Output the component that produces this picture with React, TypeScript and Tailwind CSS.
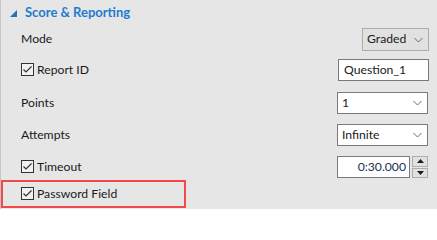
import React from "react";

const font = { fontFamily: '"Segoe UI", Lato, "Noto Sans", sans-serif' };

function CheckBox() {
  return (
    <span className="flex h-[13px] w-[13px] shrink-0 items-center justify-center border border-[#333333] bg-[#f2f2f2]">
      <svg width="11" height="11" viewBox="0 0 11 11">
        <path d="M1.5 5.5 L4 8 L9.5 2.5" fill="none" stroke="#333333" strokeWidth="1.2" />
      </svg>
    </span>
  );
}

function Chevron() {
  return (
    <svg width="9" height="6" viewBox="0 0 9 6" className="shrink-0">
      <path d="M0.5 1 L4.5 5 L8.5 1" fill="none" stroke="#6a6a6a" strokeWidth="1" />
    </svg>
  );
}

function Label({ text, checked }: { text: string; checked?: boolean }) {
  return (
    <div className="flex items-center gap-[3px] text-[12.2px] text-[#1a1a1a]">
      {checked ? <CheckBox /> : null}
      <span>{text}</span>
    </div>
  );
}

function Select({ value, width, flat }: { value: string; width: string; flat?: boolean }) {
  return (
    <div
      className={`flex h-full items-center justify-between pl-[4px] pr-[5px] text-[12.2px] text-[#1a1a1a] ${width} ${
        flat ? "border border-[#adadad] bg-[#e1e1e1]" : "border border-[#7a7a7a] bg-white"
      }`}
    >
      <span>{value}</span>
      <Chevron />
    </div>
  );
}

export default function App() {
  return (
    <div
      className="h-[209px] w-[437px] overflow-hidden border-l border-[#c6c6c6] bg-[#e6e6e6]"
      style={font}
    >
      <div className="flex h-[26px] items-center gap-[8px] pl-[9px]">
        <svg width="7" height="7" viewBox="0 0 7 7">
          <path d="M7 0 L7 7 L0 7 Z" fill="#2a6fb5" />
        </svg>
        <span className="text-[13px] font-bold text-[#1e7ccf]">Score &amp; Reporting</span>
      </div>

      <div className="mt-[2px] flex h-[23px] items-center justify-between pl-[20px] pr-[8px]">
        <Label text="Mode" />
        <Select value="Graded" width="w-[67px]" flat />
      </div>

      <div className="mt-[8px] flex h-[22px] items-center justify-between pl-[20px] pr-[8px]">
        <Label text="Report ID" checked />
        <div className="flex h-full w-[91px] items-center border border-[#7a7a7a] bg-white pl-[5px] text-[12.2px] text-[#1a1a1a]">
          Question_1
        </div>
      </div>

      <div className="mt-[11px] flex h-[22px] items-center justify-between pl-[20px] pr-[9px]">
        <Label text="Points" />
        <Select value="1" width="w-[91px]" />
      </div>

      <div className="mt-[10px] flex h-[22px] items-center justify-between pl-[20px] pr-[9px]">
        <Label text="Attempts" />
        <Select value="Infinite" width="w-[91px]" />
      </div>

      <div className="mt-[10px] flex h-[22px] items-center justify-between pl-[20px] pr-[9px]">
        <Label text="Timeout" checked />
        <div className="flex h-full items-center gap-[2px]">
          <div className="flex h-full w-[73px] items-center justify-end border border-[#7a7a7a] bg-white pr-[3px] text-[12.2px] text-[#16304f]">
            0:30.000
          </div>
          <div className="flex h-full w-[16px] flex-col gap-[1px]">
            <div className="flex flex-1 items-center justify-center border border-[#adadad] bg-[#e1e1e1]">
              <svg width="7" height="4" viewBox="0 0 7 4">
                <path d="M0 4 L3.5 0 L7 4 Z" fill="#1a1a1a" />
              </svg>
            </div>
            <div className="flex flex-1 items-center justify-center border border-[#adadad] bg-[#e1e1e1]">
              <svg width="7" height="4" viewBox="0 0 7 4">
                <path d="M0 0 L7 0 L3.5 4 Z" fill="#1a1a1a" />
              </svg>
            </div>
          </div>
        </div>
      </div>

      <div className="mt-[2px] flex h-[28px] w-[185px] items-center border-2 border-[#f24a4a] pl-[18px]">
        <Label text="Password Field" checked />
      </div>
    </div>
  );
}
